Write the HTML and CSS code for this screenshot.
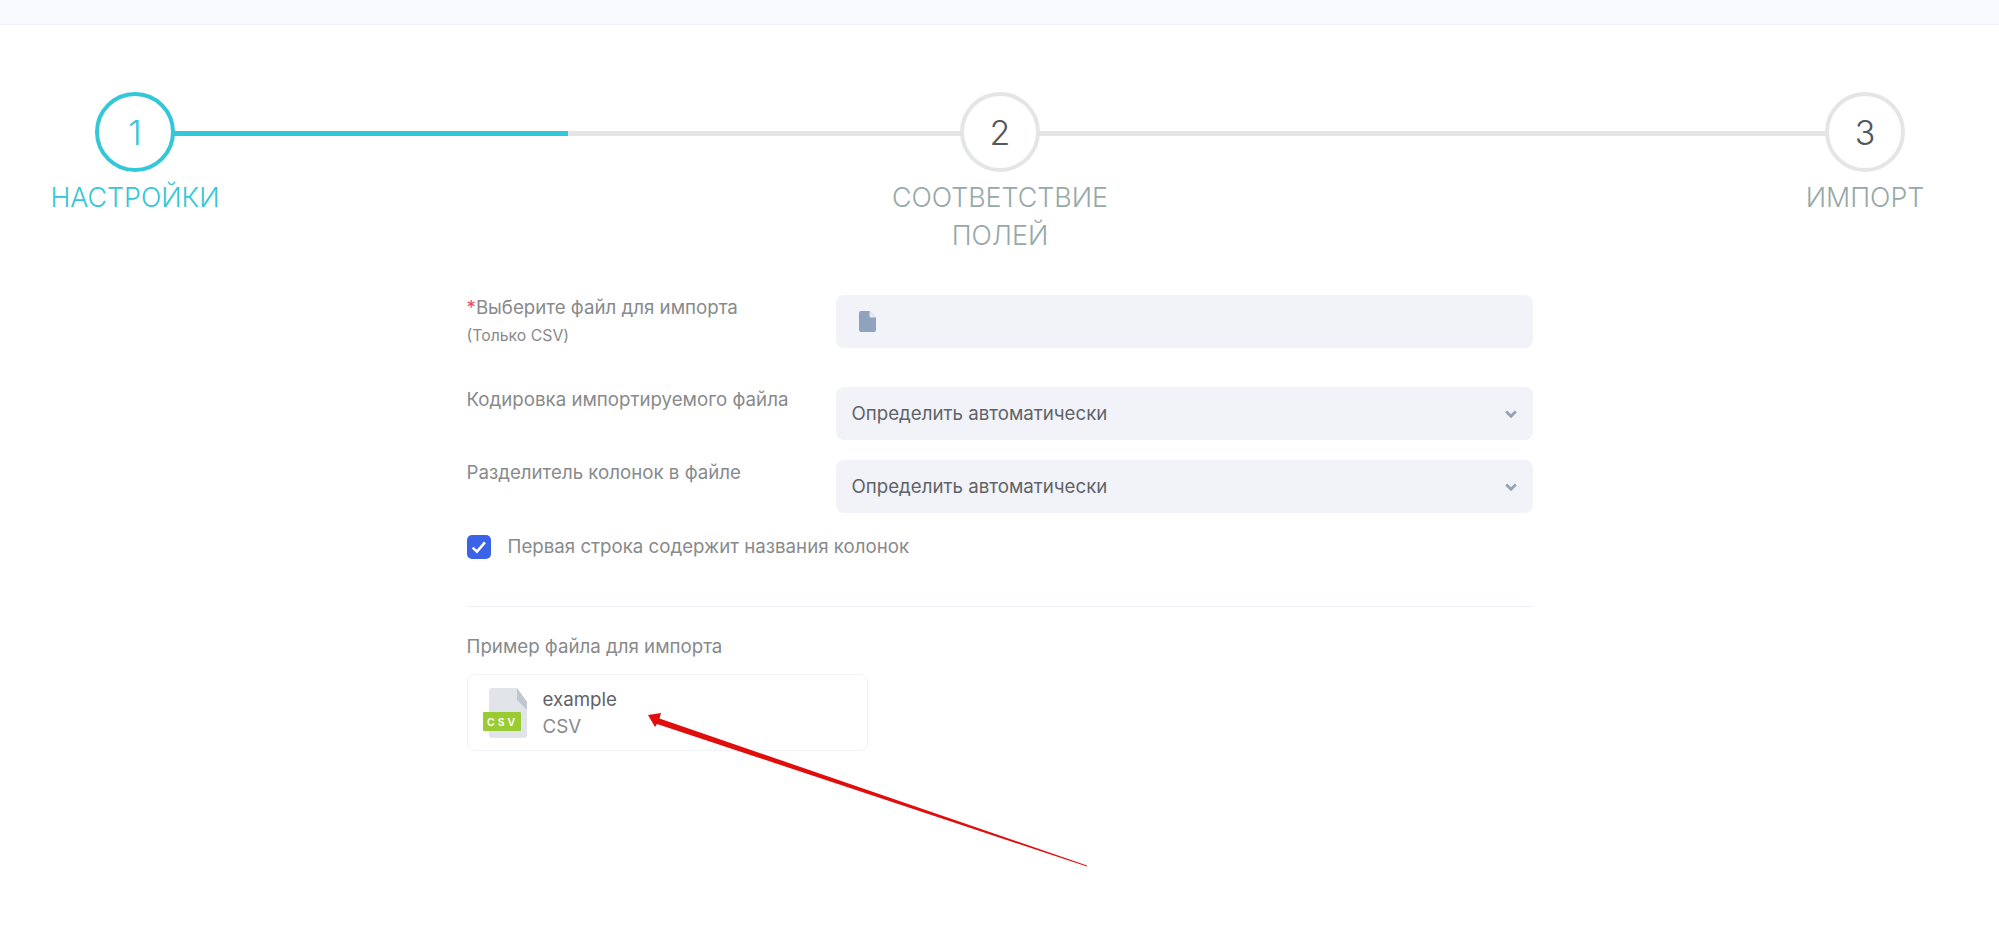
FILE: index.html
```html
<!DOCTYPE html>
<html lang="ru">
<head>
  <meta charset="UTF-8">
  <meta name="viewport" content="width=device-width, initial-scale=1.0">
  <title>Импорт</title>
  <link rel="stylesheet" href="styles.css">
</head>
<body>
  <div class="topbar"></div>

  <div class="stepper">
    <div class="track"><div class="track-fill"></div></div>
    <div class="step active">
      <div class="step-num">1</div>
      <div class="step-label">Настройки</div>
    </div>
    <div class="step">
      <div class="step-num">2</div>
      <div class="step-label">Соответствие полей</div>
    </div>
    <div class="step">
      <div class="step-num">3</div>
      <div class="step-label">Импорт</div>
    </div>
  </div>

  <form class="form">
    <div class="row row-tall">
      <div class="row-label">
        <span class="req">*</span>Выберите файл для импорта
        <small>(Только CSV)</small>
      </div>
      <div class="field">
        <svg class="file-icon" viewBox="0 0 17 21" width="17" height="21">
          <path d="M2 0h8.5L17 6.5V19a2 2 0 0 1-2 2H2a2 2 0 0 1-2-2V2a2 2 0 0 1 2-2z" fill="#8fa3bf"/>
          <path d="M10.5 0v5a1.5 1.5 0 0 0 1.5 1.5h5z" fill="#e6eaf2"/>
        </svg>
      </div>
    </div>

    <div class="row">
      <div class="row-label">Кодировка импортируемого файла</div>
      <div class="field select">
        Определить автоматически
        <svg class="chevron" viewBox="0 0 12 8" width="12" height="8">
          <path d="M1.2 1.5 6 6.300l4.800-4.800" fill="none" stroke="#98a2b3" stroke-width="2.800"/>
        </svg>
      </div>
    </div>

    <div class="row">
      <div class="row-label">Разделитель колонок в файле</div>
      <div class="field select">
        Определить автоматически
        <svg class="chevron" viewBox="0 0 12 8" width="12" height="8">
          <path d="M1.2 1.5 6 6.300l4.800-4.800" fill="none" stroke="#98a2b3" stroke-width="2.800"/>
        </svg>
      </div>
    </div>

    <div class="check-row">
      <span class="checkbox">
        <svg viewBox="0 0 14 12" width="16" height="14">
          <path d="M1.500 6.500 5.200 10l7-8" fill="none" stroke="#fff" stroke-width="2.200"/>
        </svg>
      </span>
      <span class="check-text">Первая строка содержит названия колонок</span>
    </div>

    <hr class="divider">

    <div class="example-title">Пример файла для импорта</div>
    <div class="file-card">
      <svg class="csv-icon" viewBox="0 0 44 50" width="44" height="50">
        <path d="M9 0h25l10 14v33a3 3 0 0 1-3 3H9a3 3 0 0 1-3-3V3a3 3 0 0 1 3-3z" fill="#e1e4e8"/>
        <path d="M34 0l10 14v8L34 12z" fill="#c0c7cf"/>
        <rect x="0" y="24" width="38" height="19" rx="1" fill="#9bcb32"/>
        <text x="19.500" y="37.500" text-anchor="middle" class="csv-text">CSV</text>
      </svg>
      <div class="file-info">
        <div class="file-name">example</div>
        <div class="file-ext">CSV</div>
      </div>
    </div>
  </form>

  <!-- red annotation arrow on top of the page -->
  <svg class="arrow" viewBox="0 0 1999 936" width="1999" height="936">
    <path d="M648 715 L661 713 L659.500 718.500 L1087 865.500 L1087 866.500 L657 724 L655 727 Z" fill="#e00d0d"/>
  </svg>
</body>
</html>
```

FILE: styles.css
```css
* { box-sizing: border-box; }
html, body { height: 100%; }
body {
  margin: 0;
  position: relative;
  overflow: hidden;
  background: #fff;
  font-family: Inter, "Noto Sans", sans-serif;
  font-size: 18.7px;
  color: #888a8c;
}

.topbar {
  height: 25px;
  background: #f8f9fd;
  border-bottom: 1px solid #f1f2f7;
}

/* stepper */
.stepper {
  position: relative;
  width: 2000px;
  display: flex;
  justify-content: space-between;
  padding-top: 67px;
}
.track {
  position: absolute;
  top: 106px;
  left: 135px;
  right: 135px;
  height: 5px;
  background: #e4e5e6;
}
.track-fill {
  width: 25%;
  height: 100%;
  background: #33c7d8;
}
.step {
  position: relative;
  width: 270px;
  display: flex;
  flex-direction: column;
  align-items: center;
}
.step-num {
  width: 80px;
  height: 80px;
  display: flex;
  align-items: center;
  justify-content: center;
  border: 4px solid #e4e5e6;
  border-radius: 50%;
  background: #fff;
  color: #54575c;
  font-size: 34px;
  font-weight: 350;
}
.step-label {
  margin-top: 6px;
  text-align: center;
  text-transform: uppercase;
  font-size: 26.8px;
  font-weight: 300;
  line-height: 38px;
  color: #96a9a9;
}
.step.active .step-num {
  border-color: #33c7d8;
  color: #33c7d8;
}
.step.active .step-label { color: #33c7d8; }

/* form */
.form {
  width: 1066px;
  margin: 41px auto 0;
}
.row {
  display: grid;
  grid-template-columns: 369px 697px;
  margin-bottom: 20px;
}
.row-tall { margin-bottom: 39px; }
.row-label {
  padding-top: 1px;
  line-height: 24px;
}
.row-label small {
  display: block;
  margin-top: 4px;
  font-size: 15.8px;
}
.req { color: #f1416c; }
.field {
  height: 53px;
  display: flex;
  align-items: center;
  justify-content: space-between;
  padding: 0 16px;
  background: #f1f3f8;
  border-radius: 8px;
}
.select { color: #5f6368; }
.file-icon { margin-left: 7px; }

.check-row {
  display: flex;
  align-items: center;
  gap: 17px;
  margin-top: 22px;
}
.check-text { margin-top: -2px; }
.checkbox {
  width: 24px;
  height: 24px;
  display: flex;
  align-items: center;
  justify-content: center;
  background: #3b63e8;
  border-radius: 5px;
}

.divider {
  margin: 47px 0 0;
  border: 0;
  border-top: 1px solid #ebeff5;
}

.example-title {
  margin-top: 28px;
  line-height: 24px;
}
.file-card {
  display: flex;
  align-items: center;
  gap: 16px;
  width: 401px;
  height: 77px;
  margin-top: 15px;
  padding-left: 15px;
  border: 1px solid #f2f3f7;
  border-radius: 8px;
}
.csv-text {
  fill: #fff;
  font-size: 10.500px;
  font-weight: 600;
  letter-spacing: 3px;
}
.file-name {
  font-size: 18.7px;
  line-height: 27px;
  color: #5f6368;
}
.file-ext {
  font-size: 18.7px;
  line-height: 27px;
}

.arrow {
  position: absolute;
  top: 0;
  left: 0;
  pointer-events: none;
}
```
